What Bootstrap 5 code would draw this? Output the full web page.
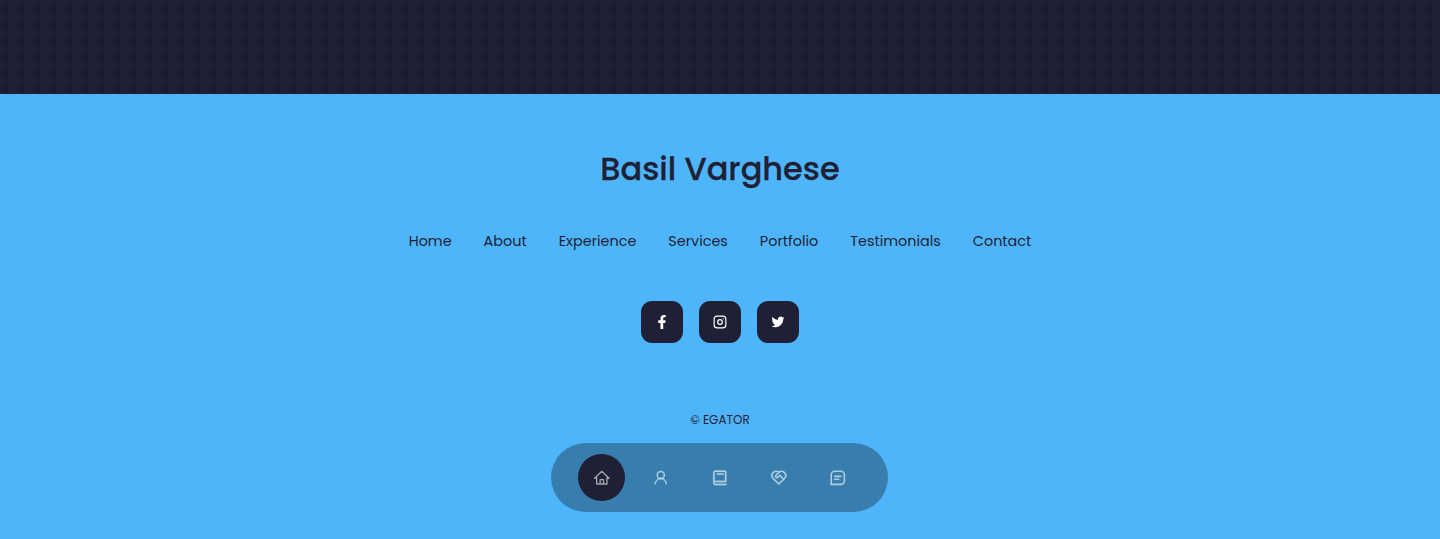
<!DOCTYPE html>
<html lang="en">
<head>
<meta charset="utf-8">
<meta name="viewport" content="width=device-width, initial-scale=1">
<title>Basil Varghese</title>
<link href="https://cdn.jsdelivr.net/npm/bootstrap@5.3.0/dist/css/bootstrap.min.css" rel="stylesheet">
<style>
:root{--ink:#1f1f36;--sky:#4fb5fa}
body{font-family:Poppins,Inter,sans-serif;background:var(--sky);color:var(--ink);height:539px;overflow:hidden}
.texture{height:94px}
footer{height:445px;padding-top:51px}
.brand{font-size:32px;font-weight:500;line-height:48px;color:var(--ink);white-space:nowrap;-webkit-text-stroke:.3px var(--ink)}
.permalinks{gap:32px;margin-top:36px;font-size:14.4px;line-height:24px}
.permalinks a{color:var(--ink);white-space:nowrap}
.socials{margin-top:48px}
.socials a{width:42px;height:42px;border-radius:11.2px;background:#1f1f36;color:#fff}
.copyright{margin-top:67px;font-size:12px;line-height:20px}
.dock{left:551.4px;top:443px;width:337px;height:69px;padding:0 27px;gap:12.6px;background:rgba(0,0,0,.3)}
.dock a{width:46.6px;height:46.6px;color:rgba(255,255,255,.6)}
.dock a.current{background:#1f1f36}
svg{display:block}
</style>
</head>
<body>
<div class="texture"><svg width="100%" height="94" aria-hidden="true"><defs><pattern id="zig" width="16" height="16" patternUnits="userSpaceOnUse"><path fill="#1f2035" d="M0 0h16v16H0z"/><path fill="#1e1f33" d="M0 0h8v16H0z"/><path fill="#1a1a2e" d="M0 10 8 2v16zM0-6 8-14V2z"/></pattern></defs><rect width="100%" height="94" fill="url(#zig)"/></svg></div>
<footer class="text-center d-flex flex-column align-items-center">
  <a href="#" class="brand text-decoration-none">Basil Varghese</a>
  <ul class="permalinks list-unstyled d-flex justify-content-center mb-0">
    <li><a class="text-decoration-none" href="#">Home</a></li>
    <li><a class="text-decoration-none" href="#">About</a></li>
    <li><a class="text-decoration-none" href="#">Experience</a></li>
    <li><a class="text-decoration-none" href="#">Services</a></li>
    <li><a class="text-decoration-none" href="#">Portfolio</a></li>
    <li><a class="text-decoration-none" href="#">Testimonials</a></li>
    <li><a class="text-decoration-none" href="#">Contact</a></li>
  </ul>
  <div class="socials d-flex gap-3">
    <a href="#" aria-label="Facebook" class="d-flex align-items-center justify-content-center"><svg width="14" height="14" viewBox="0 0 320 512" fill="currentColor"><path d="M279.14 288l14.22-92.66h-88.91v-60.13c0-25.35 12.42-50.06 52.24-50.06h40.42V6.26S260.43 0 225.36 0c-73.22 0-121.08 44.38-121.08 124.72v70.62H22.89V288h81.39v224h100.17V288z"/></svg></a>
    <a href="#" aria-label="Instagram" class="d-flex align-items-center justify-content-center"><svg width="14" height="14" viewBox="0 0 24 24" fill="none" stroke="currentColor" stroke-width="2" stroke-linecap="round"><rect x="2" y="2" width="20" height="20" rx="5"/><circle cx="12" cy="12" r="4"/><path d="M17.5 6.5h.01"/></svg></a>
    <a href="#" aria-label="Twitter" class="d-flex align-items-center justify-content-center"><svg width="14" height="14" viewBox="-.6 0 17.2 17.2" fill="currentColor"><path d="M5.026 15c6.038 0 9.341-5.003 9.341-9.334 0-.14 0-.282-.006-.422A6.685 6.685 0 0 0 16 3.542a6.658 6.658 0 0 1-1.889.518 3.301 3.301 0 0 0 1.447-1.817 6.533 6.533 0 0 1-2.087.793A3.286 3.286 0 0 0 7.875 6.03a9.325 9.325 0 0 1-6.767-3.429 3.289 3.289 0 0 0 1.018 4.382A3.323 3.323 0 0 1 .64 6.575v.045a3.288 3.288 0 0 0 2.632 3.218 3.203 3.203 0 0 1-.865.115 3.23 3.23 0 0 1-.614-.057 3.283 3.283 0 0 0 3.067 2.277A6.588 6.588 0 0 1 .78 13.58a6.32 6.32 0 0 1-.78-.045A9.344 9.344 0 0 0 5.026 15z"/></svg></a>
  </div>
  <div class="copyright">© EGATOR</div>
</footer>
<nav class="dock position-fixed d-flex align-items-center rounded-pill">
  <a href="#" aria-label="Home" class="current rounded-circle d-flex align-items-center justify-content-center"><svg width="17.6" height="17.6" viewBox="0 0 24 24" fill="none" stroke="currentColor" stroke-width="1.8"><path d="M5 12.6H2.2L12 3l9.8 9.6H19M5 11.6v8.9h14v-8.9M9.7 20.5v-6h4.6v6" stroke-linejoin="round"/></svg></a>
  <a href="#" aria-label="About" class="d-flex align-items-center justify-content-center"><svg width="17.6" height="17.6" viewBox="0 0 24 24" fill="none" stroke="currentColor" stroke-width="2"><circle cx="12" cy="8.2" r="4.9"/><path d="M4.4 20.8c.2-4.5 3.4-7.7 7.6-7.7s7.4 3.2 7.6 7.7"/></svg></a>
  <a href="#" aria-label="Experience" class="d-flex align-items-center justify-content-center"><svg width="17.6" height="17.6" viewBox="0 0 24 24" fill="currentColor" stroke="currentColor" stroke-width=".3"><path d="M6 22h15v-2H6.012C5.55 19.988 5 19.805 5 19s.55-.988 1.012-1H21V4c0-1.103-.897-2-2-2H6c-1.206 0-3 .799-3 3v14c0 2.201 1.794 3 3 3zM5 8V5c0-.805.55-.988 1-1h13v12H5V8z"/><path d="M8 6h9v2H8z"/></svg></a>
  <a href="#" aria-label="Services" class="d-flex align-items-center justify-content-center"><svg width="17.6" height="17.6" viewBox="0 0 24 24" fill="none" stroke="currentColor" stroke-width="2.2" stroke-linejoin="round"><path d="M12 4.6c2.4-2 5.8-1.7 7.8.4 2.1 2.2 2.1 5.5 0 7.7L12 20.4l-7.8-7.7c-2.1-2.2-2.1-5.5 0-7.7 2-2.1 5.4-2.4 7.8-.4L8.2 8.5c-.7.7-.7 1.8 0 2.5s1.8.7 2.5 0l2.6-2.5 5.2 5.2"/></svg></a>
  <a href="#" aria-label="Contact" class="d-flex align-items-center justify-content-center"><svg width="17.6" height="17.6" viewBox="0 0 24 24" fill="none" stroke="currentColor" stroke-width="2.2"><path d="M3 21V8a5 5 0 0 1 5-5h8a5 5 0 0 1 5 5v8a5 5 0 0 1-5 5zM7 10h10M7 14h7"/></svg></a>
</nav>
<script src="https://cdn.jsdelivr.net/npm/bootstrap@5.3.0/dist/js/bootstrap.bundle.min.js"></script>
</body>
</html>
